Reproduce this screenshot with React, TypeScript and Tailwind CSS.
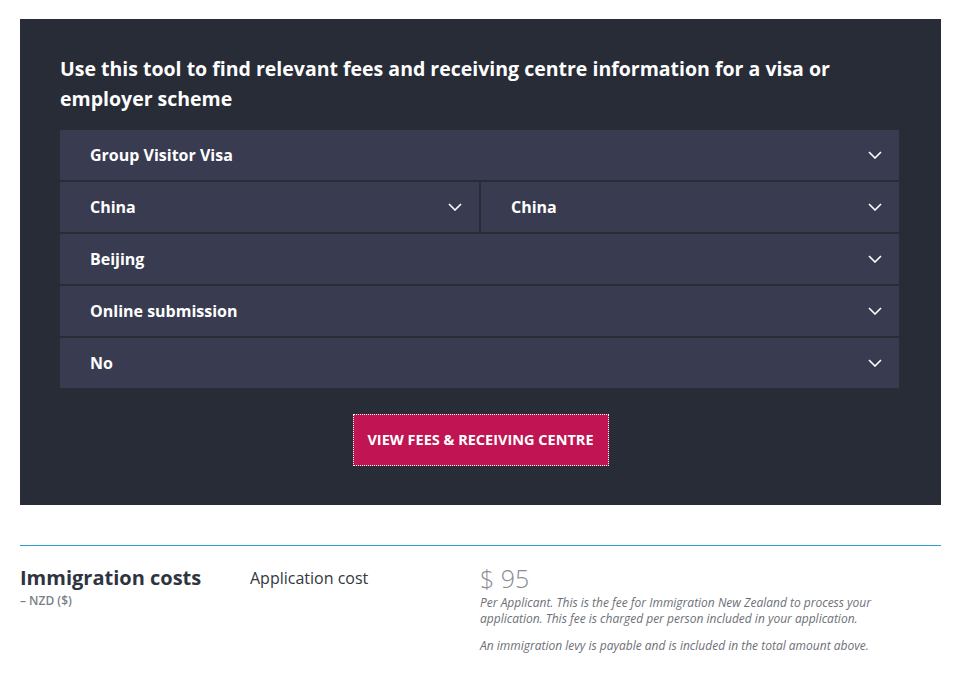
import React from "react";

const Chevron = () => (
  <svg width="14" height="8" viewBox="0 0 14 8" fill="none" className="shrink-0">
    <path d="M1 1l6 6 6-6" stroke="#ffffff" strokeWidth="1.6" />
  </svg>
);

const Select = ({ label, className = "" }: { label: string; className?: string }) => (
  <div className={`flex h-[50px] items-center justify-between bg-[#393b50] pl-[30px] pr-[17px] ${className}`}>
    <span className="text-[16px] font-bold text-white">{label}</span>
    <Chevron />
  </div>
);

export default function App() {
  return (
    <div className="min-h-[677px] bg-white pt-[19px] font-['Open_Sans',sans-serif]">
      <div className="mx-[20px] w-[921px] bg-[#282c37] px-[40px] pb-[39px] pt-[35px]">
        <h2 className="max-w-[800px] text-[19.5px] font-bold leading-[30px] text-white">
          Use this tool to find relevant fees and receiving centre information for a visa or employer scheme
        </h2>
        <div className="mt-[16px] flex w-[839px] flex-col gap-[2px]">
          <Select label="Group Visitor Visa" />
          <div className="flex gap-[2px]">
            <Select label="China" className="w-[419px]" />
            <Select label="China" className="flex-1" />
          </div>
          <Select label="Beijing" />
          <Select label="Online submission" />
          <Select label="No" />
        </div>
        <div className="mt-[26px] flex justify-center">
          <button className="h-[52px] w-[256px] bg-[#c01552] text-[14.5px] font-bold uppercase text-white outline-1 outline-dotted outline-offset-[-1px] outline-white">
            View fees &amp; receiving centre
          </button>
        </div>
      </div>
      <div className="mx-[20px] mt-[40px] w-[921px] border-t border-solid border-t-[#2f9fcf]">
        <div className="flex pt-[20px]">
          <div className="w-[230px]">
            <div className="text-[20px] font-bold leading-[24px] text-[#2e3440]">Immigration costs</div>
            <div className="mt-[2px] text-[12px] font-semibold leading-[18px] text-[#7a7f87]">– NZD ($)</div>
          </div>
          <div className="w-[230px] text-[16px] leading-[24px] text-[#33373f]">Application cost</div>
          <div className="w-[420px]">
            <div className="text-[25px] font-light leading-[24px] text-[#8a8d93]">$ 95</div>
            <p className="mt-[5px] text-[12px] italic leading-[15.5px] text-[#6d7077]">
              Per Applicant. This is the fee for Immigration New Zealand to process your application. This fee is charged per person included in your application.
            </p>
            <p className="mt-[12px] text-[12px] italic leading-[15.5px] text-[#6d7077]">
              An immigration levy is payable and is included in the total amount above.
            </p>
          </div>
        </div>
      </div>
    </div>
  );
}
